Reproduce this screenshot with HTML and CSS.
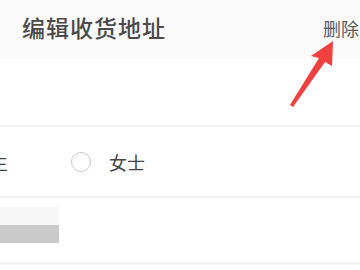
FILE: index.html
```html
<!DOCTYPE html>
<html lang="zh-CN">
<head>
  <meta charset="UTF-8" />
  <meta name="viewport" content="width=device-width, initial-scale=1.0" />
  <title>编辑收货地址</title>
  <link rel="stylesheet" href="styles.css">
</head>
<body>
  <div class="page">
    <div class="header">
      <h1 class="title">编辑收货地址</h1>
      <span class="btn-delete">删除</span>
    </div>

    <div class="row row-empty"></div>

    <div class="row row-gender">
      <label class="option option-first">
        <span class="radio"></span>
        <span>先生</span>
      </label>
      <label class="option">
        <span class="radio"></span>
        <span>女士</span>
      </label>
    </div>

    <div class="row row-blur">
      <div class="blur-block">
        <div class="blur-top"></div>
        <div class="blur-bottom"></div>
      </div>
    </div>

    <div class="row row-last"></div>

    <!-- 指向删除按钮的箭头 -->
    <svg class="arrow" width="360" height="270" viewBox="0 0 360 270">
      <polygon points="333,41 311,56 319,58 290,105 293,107 325,62 332,66" fill="#f2403f" />
    </svg>
  </div>
</body>
</html>
```

FILE: styles.css
```css
body {
  margin: 0;
  padding: 0;
  background: #fff;
  font-family: "Noto Sans CJK SC", "Noto Sans", sans-serif;
  overflow: hidden;
}

.page {
  position: relative;
  width: 360px;
  height: 270px;
  overflow: hidden;
}

.header {
  height: 59px;
  background: #fafafa;
  display: flex;
  align-items: center;
  justify-content: space-between;
  padding-left: 22px;
  box-sizing: border-box;
}

.title {
  margin: 0;
  font-size: 23px;
  font-weight: 500;
  color: #4a4a4a;
  letter-spacing: 1px;
  line-height: 1;
  margin-top: -4px;
}

.btn-delete {
  font-size: 18px;
  color: #5a5a5a;
  margin-right: 1px;
  margin-top: -4px;
  white-space: nowrap;
}

.row {
  border-bottom: 2px solid #f3f3f3;
  box-sizing: border-box;
}

.row-empty {
  height: 68px;
}

.row-gender {
  height: 71px;
  display: flex;
  align-items: center;
  gap: 63px;
  margin-left: -66px;
}

.option {
  display: flex;
  align-items: center;
  gap: 18px;
  font-size: 18px;
  color: #444;
}

.radio {
  width: 18px;
  height: 18px;
  border: 1.5px solid #c8c8c8;
  border-radius: 50%;
}

.option-first .radio {
  visibility: hidden;
}

.row-blur {
  height: 66px;
  padding-top: 9px;
}

.blur-block {
  width: 59px;
}

.blur-top {
  height: 18px;
  background: #f7f7f7;
}

.blur-bottom {
  height: 18px;
  background: #cacaca;
}

.row-last {
  height: 20px;
  border-bottom: none;
  border-top: 1px solid #f6f6f6;
}

.arrow {
  position: absolute;
  left: 0;
  top: 0;
}
```
